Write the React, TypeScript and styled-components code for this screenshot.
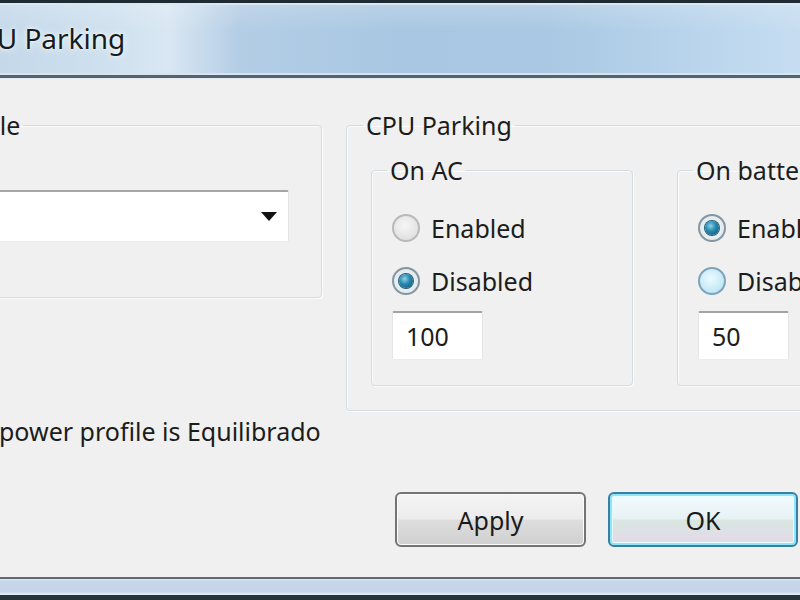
import styled, { createGlobalStyle } from "styled-components";

const Global = createGlobalStyle`
    html, body {
        margin: 0;
        padding: 0;
        background: #f0f0f0;
    }
    * {
        box-sizing: border-box;
    }
`;

const Window = styled.div`
    width: 800px;
    height: 600px;
    overflow: hidden;
    display: flex;
    flex-direction: column;
    font-family: "Noto Sans", "DejaVu Sans", sans-serif;
    color: #1c1c1c;
    background: #f0f0f0;
`;

const TitleBar = styled.div`
    height: 78px;
    flex-shrink: 0;
    display: flex;
    align-items: center;
    border-top: 3px solid #1f2b33;
    border-bottom: 3px solid #56636e;
    box-shadow: inset 0 2px 0 #dae6f0, inset 0 -2px 0 #d6e4ef, 0 1px 0 #e4ebee;
    background:
        linear-gradient(180deg, rgba(255, 255, 255, 0.18) 0%, rgba(255, 255, 255, 0) 40%),
        linear-gradient(90deg, #c4d8ea 0%, #cfe1ef 14%, #d9e7f3 21%, #b3cde5 30%, #a9c7e2 50%, #aac8e3 68%, #bad5ec 88%, #c6ddf1 100%);
`;

const Title = styled.span`
    margin-left: -38px;
    margin-top: -2px;
    font-size: 28px;
    color: #161b20;
    text-shadow: 0 0 8px rgba(255, 255, 255, 0.9), 0 0 3px rgba(255, 255, 255, 0.9);
`;

const Body = styled.div`
    flex: 1;
    display: flex;
    flex-direction: column;
    margin-left: -160px;
    padding-top: 34px;
`;

const TopRow = styled.div`
    display: flex;
    align-items: flex-start;
    gap: 24px;
`;

const Group = styled.fieldset<{ $w: number; $h: number }>`
    margin: 0;
    width: ${(p) => p.$w}px;
    height: ${(p) => p.$h}px;
    flex-shrink: 0;
    padding: 0;
    border: 1px solid #d3dce2;
    border-radius: 4px;
    box-shadow: inset 1px 1px 0 #fbfbfb, 1px 1px 0 #fbfbfb;
    min-width: 0;
`;

const Legend = styled.legend<{ $off?: number }>`
    margin-left: ${(p) => p.$off ?? 16}px;
    padding: 0 3px;
    font-size: 25px;
    line-height: 26px;
`;

const Combo = styled.div`
    margin: 52px 32px 0 20px;
    height: 52px;
    background: #fff;
    border-top: 2px solid #a5a5a5;
    border-left: 1px solid #e4e4e4;
    border-right: 1px solid #e4e4e4;
    border-bottom: 1px solid #e8e8e8;
    border-radius: 2px;
    display: flex;
    align-items: center;
    justify-content: flex-end;
    padding-right: 11px;
`;

const Arrow = styled.span`
    width: 0;
    height: 0;
    border-left: 8px solid transparent;
    border-right: 8px solid transparent;
    border-top: 9px solid #111;
`;

const SubRow = styled.div`
    display: flex;
    gap: 44px;
    margin: 19px 0 0 24px;
`;

const Option = styled.label`
    display: flex;
    align-items: center;
    gap: 11px;
    height: 30px;
    font-size: 25px;
`;

const Radio = styled.span<{ $state: "off" | "on" | "hover" }>`
    width: 28px;
    height: 28px;
    border-radius: 50%;
    flex-shrink: 0;
    display: flex;
    align-items: center;
    justify-content: center;
    border: 2px solid
        ${(p) => (p.$state === "off" ? "#b9b9b9" : p.$state === "hover" ? "#7fa3ba" : "#8596a2")};
    background: ${(p) =>
        p.$state === "off"
            ? "radial-gradient(circle at 45% 40%, #f6f6f6 0%, #e2e2e2 70%, #d2d2d2 100%)"
            : p.$state === "hover"
            ? "radial-gradient(circle at 45% 40%, #ecfaff 0%, #c4e9f6 65%, #9fd2e6 100%)"
            : "radial-gradient(circle, #f2f6f8 0%, #dde6ea 100%)"};
    &::after {
        content: "";
        display: ${(p) => (p.$state === "on" ? "block" : "none")};
        width: 14px;
        height: 14px;
        border-radius: 50%;
        background: radial-gradient(circle at 40% 35%, #8fd3ea 0%, #2b8db3 40%, #0d4a68 100%);
        box-shadow: 0 0 0 1px #1f5a74;
    }
`;

const Options = styled.div`
    display: flex;
    flex-direction: column;
    gap: 23px;
    padding: 30px 0 0 20px;
`;

const Field = styled.div`
    width: 91px;
    height: 49px;
    margin: 15px 0 0 20px;
    background: #fff;
    border-top: 2px solid #a3a3a3;
    border-left: 1px solid #e4e4e4;
    border-right: 1px solid #e4e4e4;
    border-bottom: 1px solid #ececec;
    border-radius: 2px;
    display: flex;
    align-items: center;
    padding-left: 13px;
    font-size: 25px;
`;

const Status = styled.div`
    margin: 5px 0 0 6px;
    font-size: 25px;
    line-height: 30px;
    white-space: nowrap;
`;

const Buttons = styled.div`
    margin-top: 46px;
    margin-right: 2px;
    display: flex;
    justify-content: flex-end;
    gap: 22px;
`;

const Button = styled.button<{ $primary?: boolean }>`
    width: ${(p) => (p.$primary ? 190 : 191)}px;
    height: 55px;
    font-family: "Noto Sans", "DejaVu Sans", sans-serif;
    font-size: 25px;
    color: #1a1a1a;
    border-radius: 6px;
    border: 2px solid ${(p) => (p.$primary ? "#3a7ea3" : "#747474")};
    background: ${(p) =>
        p.$primary
            ? "linear-gradient(180deg, #f2fbfd 0%, #e8f2f4 48%, #d8e6e0 52%, #e6d8ea 100%)"
            : "linear-gradient(180deg, #f4f4f4 0%, #ececec 48%, #dddddd 52%, #d0d0d0 100%)"};
    box-shadow: ${(p) =>
        p.$primary
            ? "inset 0 0 0 2px #8fe6f6, inset 0 0 0 3px #e8fbff"
            : "inset 0 0 0 1px #fbfbfb"};
`;

const BottomFrame = styled.div`
    height: 23px;
    flex-shrink: 0;
    border-top: 2px solid #5d6a72;
    border-bottom: 5px solid #26333a;
    background: linear-gradient(180deg, #dfeaf3 0%, #c6d7ec 12%, #c4d4ea 80%, #e8f1f8 100%);
`;

function ModeGroup({ label, value, enabled, hoverOther }: { label: string; value: string; enabled: boolean; hoverOther?: boolean }) {
    return (
        <Group $w={262} $h={229}>
            <Legend $off={15}>{label}</Legend>
            <Options>
                <Option>
                    <Radio $state={enabled ? "on" : "off"} />
                    Enabled
                </Option>
                <Option>
                    <Radio $state={enabled ? (hoverOther ? "hover" : "off") : "on"} />
                    Disabled
                </Option>
            </Options>
            <Field>{value}</Field>
        </Group>
    );
}

export default function App() {
    return (
        <Window>
            <Global />
            <TitleBar>
                <Title>CPU Parking</Title>
            </TitleBar>
            <Body>
                <TopRow>
                    <Group $w={482} $h={186}>
                        <Legend $off={20}>Power profile</Legend>
                        <Combo>
                            <Arrow />
                        </Combo>
                    </Group>
                    <Group $w={640} $h={299}>
                        <Legend $off={16}>CPU Parking</Legend>
                        <SubRow>
                            <ModeGroup label="On AC" value="100" enabled={false} />
                            <ModeGroup label="On battery" value="50" enabled hoverOther />
                        </SubRow>
                    </Group>
                </TopRow>
                <Status>Your current power profile is Equilibrado</Status>
                <Buttons>
                    <Button>Apply</Button>
                    <Button $primary>OK</Button>
                </Buttons>
            </Body>
            <BottomFrame />
        </Window>
    );
}
